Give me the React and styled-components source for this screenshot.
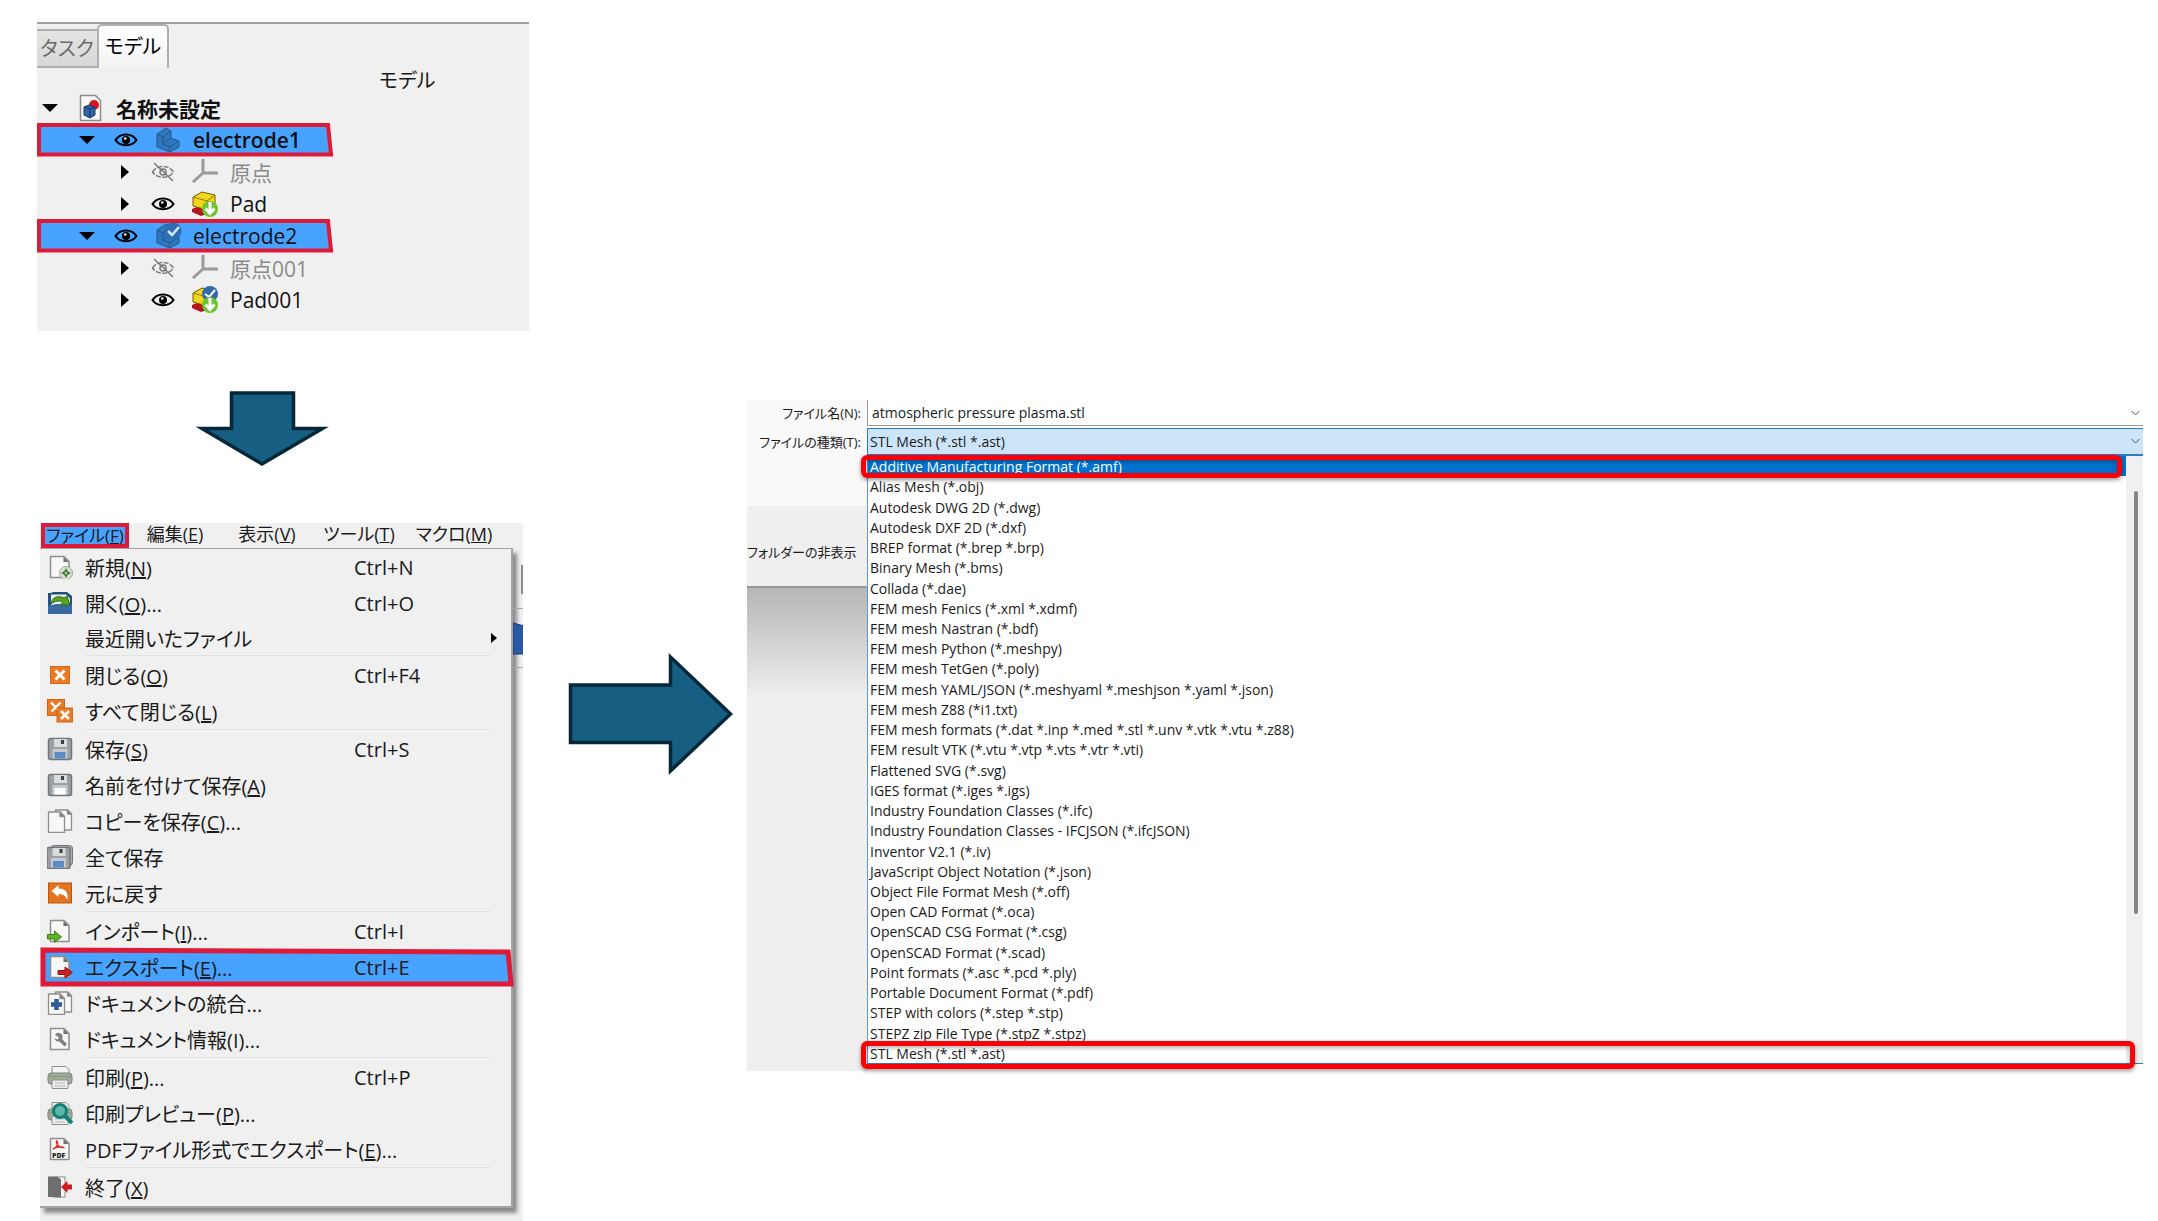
import styled, { createGlobalStyle } from "styled-components";
import React from "react";

const GlobalStyle = createGlobalStyle`
  * {
    box-sizing: border-box;
  }
  body {
    margin: 0;
    background: #ffffff;
    color: #1a1a1a;
    font-family: "Open Sans", "Noto Sans CJK JP", sans-serif;
    font-feature-settings: "palt";
  }
  button, input, select {
    font: inherit;
    font-feature-settings: inherit;
    color: inherit;
  }
  ul {
    list-style: none;
    margin: 0;
    padding: 0;
  }
`

const Page = styled.main`
  display: flex;
  align-items: flex-start;
  padding-left: 37px;
`

const Steps = styled.div`
  display: flex;
  flex-direction: column;
  flex: none;
  width: 492px;
  padding-top: 22px;
`

const DownArrow = styled.svg`
  display: block;
  width: 134px;
  height: 76px;
  margin: 60px 0 56px 158px;
`

const RightArrow = styled.svg`
  flex: none;
  width: 166px;
  height: 124px;
  margin: 652px 13px 0 39px;
`

/* ---- model tree ---- */

const ModelPanel = styled.section`
  height: 309px;
  background: #f0f0f0;
  border-top: 2px solid #a0a0a0;
  font-size: 20px;
`

const Tabs = styled.div`
  display: flex;
  align-items: flex-end;
  height: 44px;
`

const Tab = styled.button`
  width: ${props => props.$active ? "72px" : "60px"};
  height: ${props => props.$active ? "44px" : "39px"};
  padding: 0 0 3px;
  color: ${props => props.$active ? "#000000" : "#6a6a6a"};
  background: ${props => props.$active ? "linear-gradient(#ffffff, #f2f2f2)" : "linear-gradient(#e4e4e4, #d8d8d8)"};
  border: 2px solid #b0b0b0;
  border-left-width: ${props => props.$active ? "2px" : "0"};
  border-right-width: ${props => props.$active ? "2px" : "0"};
  border-bottom-width: ${props => props.$active ? "0" : "2px"};
  border-radius: ${props => props.$active ? "5px 5px 0 0" : "0"};
`

const PanelTitle = styled.h2`
  margin: 0;
  padding: 2px 0 0 342px;
  font-size: 20px;
  font-weight: 400;
  line-height: 22px;
`

const Tree = styled.ul`
  font-size: 21px;
`

const TreeRow = styled.li`
  position: relative;
  display: flex;
  align-items: center;
  height: 32px;
  padding-left: ${props => props.$indent}px;
  color: ${props => props.$hidden ? "#8a8a8a" : "#111111"};
  font-weight: ${props => props.$bold ? 600 : 400};
  white-space: nowrap;
`

const Expander = styled.svg`
  position: relative;
  flex: none;
  width: 18px;
  height: 18px;
  margin-right: 18px;
`

const Eye = styled.svg`
  position: relative;
  flex: none;
  width: 24px;
  height: 20px;
  margin-right: 16px;
`

const NodeIcon = styled.svg`
  position: relative;
  flex: none;
  width: 28px;
  height: 28px;
  margin-right: 11px;
`

const NodeName = styled.span`
  position: relative;
`

const Marker = styled.svg`
  position: absolute;
  left: 0;
  top: -2px;
  width: 297px;
  height: 36px;
`

/* ---- file menu ---- */

const MenuPanel = styled.section`
  width: 483px;
  margin-left: 3px;
  padding-bottom: 15px;
  background: #f0f0f0;
  font-size: 20px;
`

const MenuBar = styled.nav`
  display: flex;
  height: 25px;
  padding-left: 1px;
  overflow: hidden;
`

const MenuBarItem = styled.button`
  flex: none;
  width: ${props => props.$wide ? "98px" : "92px"};
  height: 25px;
  padding: 0 0 3px;
  border: none;
  background: none;
  font-size: 18px;
  line-height: 22px;
  text-align: center;
  white-space: nowrap;

  ${props => props.$open && `
    width: 88px;
    padding: 0;
    background: #47a3ff;
    border: 4px solid #dd1a38;
    font-size: 17px;
    line-height: 14px;
  `}
`

const MenuBody = styled.div`
  display: flex;
`

const MenuList = styled.ul`
  flex: 1;
  border: 2px solid #a3a3a3;
  border-top-width: 1px;
  border-left: none;
  box-shadow: 4px 5px 4px #8a8a8a;
  padding-bottom: 1px;
`

const BehindStrip = styled.svg`
  flex: none;
  width: 10px;
  height: 130px;
`

const MenuItem = styled.li`
  position: relative;
  height: ${props => props.$short ? "34px" : "36px"};
`

const MenuButton = styled.button`
  position: relative;
  display: grid;
  grid-template-columns: 26px 281px 1fr 14px;
  align-items: center;
  width: 100%;
  height: 100%;
  padding: 0 7px;
  border: none;
  background: none;
  text-align: left;
  white-space: nowrap;
`

const MenuLabel = styled.span`
  padding-left: 12px;
`

const Separator = styled.li`
  height: 2px;
  margin: 0 20px 0 45px;
  border-top: 1px solid #e2e2e2;
`

const ExportMarker = styled.svg`
  position: absolute;
  left: 0;
  top: -2px;
  width: 474px;
  height: 40px;
`

/* ---- file type dialog ---- */

const Dialog = styled.section`
  position: relative;
  flex: 1;
  min-width: 0;
  display: grid;
  grid-template-columns: 120px 1fr;
  margin: 400px 15px 0 0;
  font-size: 14px;
`

const Side = styled.div`
  display: flex;
  flex-direction: column;
  font-size: 13px;
`

const Labels = styled.div`
  height: 106px;
  background: #f9f9f9;
  text-align: right;
  padding-right: 6px;

  label {
    display: block;
    height: 29px;
    line-height: 27px;
    white-space: nowrap;
  }
`

const HideFolders = styled.button`
  height: 82px;
  padding: 10px 0 0;
  border: none;
  border-bottom: 2px solid #9a9a9a;
  background: #efefef;
  text-align: left;
  white-space: nowrap;
`

const SideShade = styled.div`
  flex: 1;
  background: linear-gradient(#b6b6b6, #efefef 110px);
`

const Fields = styled.div`
  min-width: 0;
`

const Field = styled.div`
  position: relative;

  svg {
    position: absolute;
    right: 3px;
    top: 9px;
    width: 9px;
    height: 8px;
    pointer-events: none;
  }
`

const FileName = styled.input`
  display: block;
  width: 100%;
  height: 26px;
  padding: 0 4px;
  border: solid #9a9a9a;
  border-width: 0 0 1px 1px;
  background: #ffffff;
`

const FileType = styled.select`
  display: block;
  appearance: none;
  width: 100%;
  height: 28px;
  margin-top: 2px;
  padding: 0 2px;
  border: solid #2f7cc4;
  border-width: 1px 0 2px 1px;
  border-radius: 0;
  background: #cce4f7;
`

const DropDown = styled.div`
  position: relative;
  display: flex;
  height: 608px;
  border-left: 1px solid #5a9bd5;
  border-bottom: 1px solid #2f7cc4;
`

const Formats = styled.ul`
  flex: 1;
  display: grid;
  grid-auto-rows: 1fr;
`

const Format = styled.li`
  display: flex;
  align-items: center;
  min-height: 0;
  padding: 1px 0 0 2px;
  line-height: 19px;
  white-space: nowrap;
  color: ${props => props.$selected ? "#ffffff" : "#1a1a1a"};
  background: ${props => props.$selected ? "#0072cf" : "#ffffff"};
`

const ScrollTrack = styled.div`
  width: 17px;
  padding: 35px 5px 0 8px;
  background: #f0f0f0;
`

const ScrollThumb = styled.div`
  height: 423px;
  border-radius: 2px;
  background: #858585;
`

const Callout = styled.div`
  position: absolute;
  left: -7px;
  right: ${props => props.$last ? "8px" : "21px"};
  ${props => props.$last ? "bottom: -6px; height: 28px;" : "top: -1px; height: 23px;"}
  border: 5px solid #fb0007;
  border-radius: 6px;
  box-shadow: 0 2px 4px rgba(0, 0, 0, 0.4), inset 0 2px 4px rgba(0, 0, 0, 0.3);
  pointer-events: none;
`

const DialogEnd = styled.div`
  grid-column: 1 / -1;
  height: 7px;
  background: linear-gradient(to right, #efefef 120px, #ffffff 120px);
`

const nodes = [
  { name: "名称未設定", icon: "document", indent: 4, open: true, bold: true },
  { name: "electrode1", icon: "body", indent: 41, open: true, eye: true, bold: true, marked: true },
  { name: "原点", icon: "origin", indent: 78, eye: true, hidden: true },
  { name: "Pad", icon: "pad", indent: 78, eye: true },
  { name: "electrode2", icon: "bodyDone", indent: 41, open: true, eye: true, marked: true },
  { name: "原点001", icon: "origin", indent: 78, eye: true, hidden: true },
  { name: "Pad001", icon: "padDone", indent: 78, eye: true },
];

const menus = [
  { label: "ファイル", accel: "F", open: true },
  { label: "編集", accel: "E" },
  { label: "表示", accel: "V" },
  { label: "ツール", accel: "T" },
  { label: "マクロ", accel: "M", wide: true },
];

const entries = [
  { icon: "new", label: "新規", accel: "N", keys: "Ctrl+N" },
  { icon: "open", label: "開く", accel: "O", dots: true, keys: "Ctrl+O" },
  { label: "最近開いたファイル", submenu: true },
  { separator: true },
  { icon: "close", label: "閉じる", accel: "O", keys: "Ctrl+F4" },
  { icon: "closeAll", label: "すべて閉じる", accel: "L" },
  { separator: true },
  { icon: "save", label: "保存", accel: "S", keys: "Ctrl+S" },
  { icon: "saveAs", label: "名前を付けて保存", accel: "A" },
  { icon: "copy", label: "コピーを保存", accel: "C", dots: true },
  { icon: "saveAll", label: "全て保存" },
  { icon: "revert", label: "元に戻す" },
  { separator: true },
  { icon: "import", label: "インポート", accel: "I", dots: true, keys: "Ctrl+I" },
  { icon: "export", label: "エクスポート", accel: "E", dots: true, keys: "Ctrl+E", marked: true },
  { icon: "merge", label: "ドキュメントの統合..." },
  { icon: "info", label: "ドキュメント情報(I)..." },
  { separator: true },
  { icon: "print", label: "印刷", accel: "P", dots: true, keys: "Ctrl+P" },
  { icon: "preview", label: "印刷プレビュー", accel: "P", dots: true },
  { icon: "pdf", label: "PDFファイル形式でエクスポート", accel: "E", dots: true },
  { separator: true },
  { icon: "exit", label: "終了", accel: "X" },
];

const formats = [
  "Additive Manufacturing Format (*.amf)",
  "Alias Mesh (*.obj)",
  "Autodesk DWG 2D (*.dwg)",
  "Autodesk DXF 2D (*.dxf)",
  "BREP format (*.brep *.brp)",
  "Binary Mesh (*.bms)",
  "Collada (*.dae)",
  "FEM mesh Fenics (*.xml *.xdmf)",
  "FEM mesh Nastran (*.bdf)",
  "FEM mesh Python (*.meshpy)",
  "FEM mesh TetGen (*.poly)",
  "FEM mesh YAML/JSON (*.meshyaml *.meshjson *.yaml *.json)",
  "FEM mesh Z88 (*i1.txt)",
  "FEM mesh formats (*.dat *.inp *.med *.stl *.unv *.vtk *.vtu *.z88)",
  "FEM result VTK (*.vtu *.vtp *.vts *.vtr *.vti)",
  "Flattened SVG (*.svg)",
  "IGES format (*.iges *.igs)",
  "Industry Foundation Classes (*.ifc)",
  "Industry Foundation Classes - IFCJSON (*.ifcJSON)",
  "Inventor V2.1 (*.iv)",
  "JavaScript Object Notation (*.json)",
  "Object File Format Mesh (*.off)",
  "Open CAD Format (*.oca)",
  "OpenSCAD CSG Format (*.csg)",
  "OpenSCAD Format (*.scad)",
  "Point formats (*.asc *.pcd *.ply)",
  "Portable Document Format (*.pdf)",
  "STEP with colors (*.step *.stp)",
  "STEPZ zip File Type (*.stpZ *.stpz)",
  "STL Mesh (*.stl *.ast)",
];

const sheet = (
  <g>
    <path d="M3.500 1.500h13.500l5 5v16h-18.500z" fill="#f7f7f5" stroke="#8d8f8c" strokeWidth="1.500" strokeLinejoin="round" />
    <path d="M16.500 2v5h5z" fill="#6f716e" />
  </g>
);

const twoSheets = (
  <g stroke="#8d8f8c" strokeWidth="1.300" strokeLinejoin="round" fill="#f7f7f5">
    <path d="M8.500 1h12l4 4v16h-16z" />
    <path d="M20.500 1v4h4z" fill="#6f716e" />
    <path d="M1.500 3h11.500l4.500 4.500v16h-16z" />
    <path d="M13 3v4.500h4.500z" fill="#6f716e" />
  </g>
);

const floppy = label => (
  <g>
    <rect x="1.500" y="1.500" width="23" height="21" rx="2" fill="#9aa0a3" stroke="#70757a" strokeWidth="1.500" />
    <rect x="7" y="2" width="13" height="8" fill="#d9dbdc" />
    <rect x="14" y="3" width="3" height="4" fill="#3b3f42" />
    <rect x="5.500" y="12" width="15" height="9.500" fill="#c6cacc" />
    <rect x="7.500" y="15" width="11" height="6.500" fill={label} />
  </g>
);

const printer = (
  <g>
    <path d="M5 9V1.500h14l3 3V9z" fill="#f4f4f4" stroke="#8d8f8c" />
    <rect x="1" y="8" width="24" height="11" rx="3" fill="#a3a8a2" stroke="#7d817c" />
    <path d="M2 11.500h22" stroke="#7fa866" strokeWidth="1.500" />
    <path d="M5 15h16v8.500H5z" fill="#ededed" stroke="#8d8f8c" />
    <path d="M8 18h10M8 21h10" stroke="#b5b5b5" />
  </g>
);

const menuIcons = {
  new: <>{sheet}<circle cx="19" cy="18" r="6.500" fill="#d7e0d4" stroke="#a3aba0" /><path d="M19 13l1.800 3.200L24 18l-3.200 1.800L19 23l-1.800-3.200L14 18l3.200-1.800z" fill="#4c7a3d" /><circle cx="19" cy="18" r="1" fill="#e7f2e2" /></>,
  open: (
    <>
      <path d="M1 2h3l2-1h14l5 4v18H1z" fill="#23527f" />
      <path d="M4 3.500h15l4 4V15H4z" fill="#eef0ee" />
      <path d="M1 15l8-2 16 0v10H1z" fill="#396aa3" />
      <path d="M4 13c1-7 7-9 13-6l3-2 3 9h-10l3-3c-4-2-8-1-12 2z" fill="#55a61f" stroke="#2f6e12" />
    </>
  ),
  close: <><rect x="3.500" y="3.500" width="19" height="17" fill="#ea7a24" stroke="#d2691a" /><path d="M8.500 7.500l9 9M17.500 7.500l-9 9" stroke="#ffffff" strokeWidth="3" /></>,
  closeAll: (
    <>
      <rect x="0.500" y="0.500" width="17" height="16" fill="#ea7a24" stroke="#c9651a" />
      <path d="M4 3.500l9 9M13.500 3.500l-9 9" stroke="#ffffff" strokeWidth="2.400" />
      <rect x="10" y="9" width="16" height="14" fill="#ea7a24" stroke="#c9651a" />
      <path d="M14 12l8 8M22 12l-8 8" stroke="#ffffff" strokeWidth="2.600" />
    </>
  ),
  save: floppy("#5a8cc9"),
  saveAs: floppy("#ffffff"),
  copy: twoSheets,
  saveAll: <><rect x="4" y="0.500" width="21.500" height="20" rx="3" fill="#a9adb0" stroke="#70757a" /><g transform="translate(-1.500 1)">{floppy("#5a8cc9")}</g></>,
  revert: <><rect x="1.500" y="2" width="23" height="20" fill="#e4721f" stroke="#b9560f" /><path d="M4.500 10l7-6v3.500c7 0 10 4 9 11.500-2-4-4-6-9-6V16z" fill="#ffffff" /></>,
  import: <>{sheet}<path d="M0.500 15.500h7v-3.500l7 6-7 5.500v-3.500h-7z" fill="#62b028" stroke="#3f7d16" /></>,
  export: <>{sheet}<path d="M11 15.500h7v-3.500l7.500 5.500-7.500 5.500v-3.500h-7z" fill="#cc1f1f" stroke="#8f1212" /></>,
  merge: <>{twoSheets}<path d="M9.500 8v11M4 13.500h11" stroke="#305a94" strokeWidth="4.500" /></>,
  info: <>{sheet}<path d="M8 8a4 4 0 0 1 7 4l5 5-2.500 2.500-5-5a4 4 0 0 1-5-3l3 1 1.500-2z" fill="#7d8185" /></>,
  print: printer,
  preview: <>{printer}<circle cx="13" cy="10" r="6.500" fill="#5fb5ac" stroke="#128076" strokeWidth="3" /><path d="M18 15l7 7" stroke="#128076" strokeWidth="4" /></>,
  pdf: (
    <>
      {sheet}
      <path d="M6 12c4-1.500 6-6 3.500-8-1 3 3 7 6.500 6.500-3-1.500-7-.5-10 1.500z" fill="none" stroke="#d42a2a" strokeWidth="1.500" />
      <text x="5" y="21" fontSize="7" fontWeight="800" fill="#222222">PDF</text>
    </>
  ),
  exit: (
    <>
      <rect x="8" y="2" width="10" height="20" fill="#f5f5f5" stroke="#8a8a8a" />
      <path d="M1 1.500h9l4 3v18l-13-.5z" fill="#6e6e6e" />
      <path d="M25 9.500h-4.500V6L14 12l6.500 6v-3.500H25z" fill="#cf1b1b" />
    </>
  ),
};

const block = (
  <g stroke="#1f5a94" strokeLinejoin="round">
    <path d="M3 8l9-6 5 3v7l8 3v6l-9 5-13-5z" fill="#2f77b8" />
    <path d="M3 8l6 3 8-6M9 11v7l7 3v5M9 18l8-6M16 21l9-6" fill="none" />
  </g>
);

const pad = (
  <g>
    <path d="M1 19l7-3 8 4v4l-6 2-9-4z" fill="#b3161d" />
    <path d="M2 7l9-5 13 3v10l-8 5-14-4z" fill="#f2d51d" stroke="#6d5c05" />
    <path d="M2 7l14 4 8-6M16 11v9" fill="none" stroke="#8f7a0a" />
  </g>
);

const padArrow = <><circle cx="19" cy="19" r="8" fill="#6cc62c" /><path d="M19 12v10M14.500 18.500l4.500 5 4.500-5" fill="none" stroke="#ffffff" strokeWidth="3" /></>;

const nodeIcons = {
  document: (
    <>
      <path d="M3.500 1.500h15l5 5v20h-20z" fill="#f8f8f8" stroke="#8d8d8d" strokeWidth="1.500" />
      <circle cx="17" cy="11" r="5" fill="#d9141e" />
      <path d="M7 13l5-2 6 2v8l-5 3-6-3z" fill="#2f66a5" stroke="#173a66" />
      <path d="M7 13l6 2 5-2M13 15v9" fill="none" stroke="#173a66" />
    </>
  ),
  body: block,
  bodyDone: <>{block}<circle cx="19" cy="9" r="8.500" fill="#2a6fb6" /><path d="M14 9l4 4 7-8" fill="none" stroke="#d6eaff" strokeWidth="2.500" /></>,
  origin: <path d="M12 1v14h15M12 15L2 24" fill="none" stroke="#999999" strokeWidth="3" />,
  pad: <>{pad}{padArrow}</>,
  padDone: <>{pad}<circle cx="19" cy="8" r="8" fill="#3169ab" /><path d="M14 8l4 3 6-7" fill="none" stroke="#ffffff" strokeWidth="2" />{padArrow}</>,
};

function Visibility({ hidden }) {
  return (
    <Eye viewBox="0 0 24 20" fill="none" stroke={hidden ? "#777777" : "#000000"} strokeWidth={hidden ? 1.5 : 2}>
      <path d="M1.500 10C6 2.500 18 2.500 22.500 10 18 17 6 17 1.500 10z" strokeDasharray={hidden ? "5 1.500" : "none"} />
      <circle cx="12" cy="10" r="3" fill={hidden ? "none" : "#000000"} />
      {hidden ? <path d="M3 1l19 18" /> : <path d="M10 8.500h2.500" stroke="#ffffff" strokeWidth="2" />}
    </Eye>
  )
}

function Chevron() {
  return (
    <svg viewBox="0 0 9 8" fill="none" stroke="#555555">
      <path d="M.5 2l4 4 4-4" />
    </svg>
  )
}

function Accel({ letter, dots }) {
  return <>{letter && <>(<u>{letter}</u>)</>}{dots && "..."}</>
}

function ModelTree() {
  return (
    <ModelPanel>
      <Tabs role="tablist">
        <Tab role="tab" aria-selected="false">タスク</Tab>
        <Tab role="tab" aria-selected="true" $active>モデル</Tab>
      </Tabs>
      <PanelTitle>モデル</PanelTitle>
      <Tree role="tree">
        {nodes.map(node => (
          <TreeRow key={node.name} role="treeitem" $indent={node.indent} $hidden={node.hidden} $bold={node.bold}>
            {node.marked && (
              <Marker viewBox="0 0 297 36" preserveAspectRatio="none">
                <path d="M2 3L291 3l3 29.500H2z" fill="#47a3ff" stroke="#dd1a38" strokeWidth="4" />
              </Marker>
            )}
            <Expander viewBox="0 0 18 18">
              <path d={node.open ? "M1 5h16l-8 8z" : "M6 2v14l8-7z"} fill="#000000" />
            </Expander>
            {node.eye && <Visibility hidden={node.hidden} />}
            <NodeIcon viewBox="0 0 28 28">{nodeIcons[node.icon]}</NodeIcon>
            <NodeName>{node.name}</NodeName>
          </TreeRow>
        ))}
      </Tree>
    </ModelPanel>
  )
}

function FileMenu() {
  return (
    <MenuPanel>
      <MenuBar>
        {menus.map(menu => (
          <MenuBarItem key={menu.label} $open={menu.open} $wide={menu.wide}>
            {menu.label}<Accel letter={menu.accel} />
          </MenuBarItem>
        ))}
      </MenuBar>
      <MenuBody>
        <MenuList role="menu">
          {entries.map((entry, i) => entry.separator ? <Separator key={i} role="separator" /> : (
            <MenuItem key={i} role="none" $short={entry.submenu}>
              {entry.marked && (
                <ExportMarker viewBox="0 0 474 40" preserveAspectRatio="none">
                  <path d="M3 3l465 2 3 32H3z" fill="#47a3ff" stroke="#dd1a38" strokeWidth="5" />
                </ExportMarker>
              )}
              <MenuButton role="menuitem">
                <svg width="26" height="24" viewBox="0 0 26 24">{menuIcons[entry.icon]}</svg>
                <MenuLabel>{entry.label}<Accel letter={entry.accel} dots={entry.dots} /></MenuLabel>
                <span>{entry.keys}</span>
                {entry.submenu && <svg width="8" height="10" viewBox="0 0 8 10"><path d="M1 0v10l6-5z" /></svg>}
              </MenuButton>
            </MenuItem>
          ))}
        </MenuList>
        <BehindStrip viewBox="0 0 10 130">
          <path d="M9 17v29" stroke="#8a8a8a" strokeWidth="2" />
          <path d="M0 60.500h10M0 119.500h10" stroke="#a8a8a8" />
          <path d="M0 75l11 3v28H0z" fill="#2b58a5" stroke="#1b3560" />
        </BehindStrip>
      </MenuBody>
    </MenuPanel>
  )
}

function FileDialog() {
  const [fileName, setFileName] = React.useState("atmospheric pressure plasma.stl");
  const [fileType, setFileType] = React.useState("STL Mesh (*.stl *.ast)");

  return (
    <Dialog>
      <Side>
        <Labels>
          <label htmlFor="fileName">ファイル名(N):</label>
          <label htmlFor="fileType">ファイルの種類(T):</label>
        </Labels>
        <HideFolders>フォルダーの非表示</HideFolders>
        <SideShade />
      </Side>
      <Fields>
        <Field>
          <FileName id="fileName" type="text" value={fileName} onChange={e => setFileName(e.target.value)} />
          <Chevron />
        </Field>
        <Field>
          <FileType id="fileType" value={fileType} onChange={e => setFileType(e.target.value)}>
            {formats.map(format => <option key={format}>{format}</option>)}
          </FileType>
          <Chevron />
        </Field>
        <DropDown>
          <Formats role="listbox" aria-label="ファイルの種類">
            {formats.map((format, i) => (
              <Format key={format} role="option" aria-selected={i === 0} $selected={i === 0}>{format}</Format>
            ))}
          </Formats>
          <ScrollTrack>
            <ScrollThumb />
          </ScrollTrack>
          <Callout />
          <Callout $last />
        </DropDown>
      </Fields>
      <DialogEnd />
    </Dialog>
  )
}

export default function App() {
  return (
    <Page>
      <GlobalStyle />
      <Steps>
        <ModelTree />
        <DownArrow viewBox="0 0 134 76">
          <path d="M36.500 2h62v35.500h29L67 73 7 37.500h29.500z" fill="#165f82" stroke="#052738" strokeWidth="3.500" />
        </DownArrow>
        <FileMenu />
      </Steps>
      <RightArrow viewBox="0 0 166 124">
        <path d="M2.500 33h100V5l60 57-60 57V90.500h-100z" fill="#165f82" stroke="#052738" strokeWidth="3.500" />
      </RightArrow>
      <FileDialog />
    </Page>
  )
}
